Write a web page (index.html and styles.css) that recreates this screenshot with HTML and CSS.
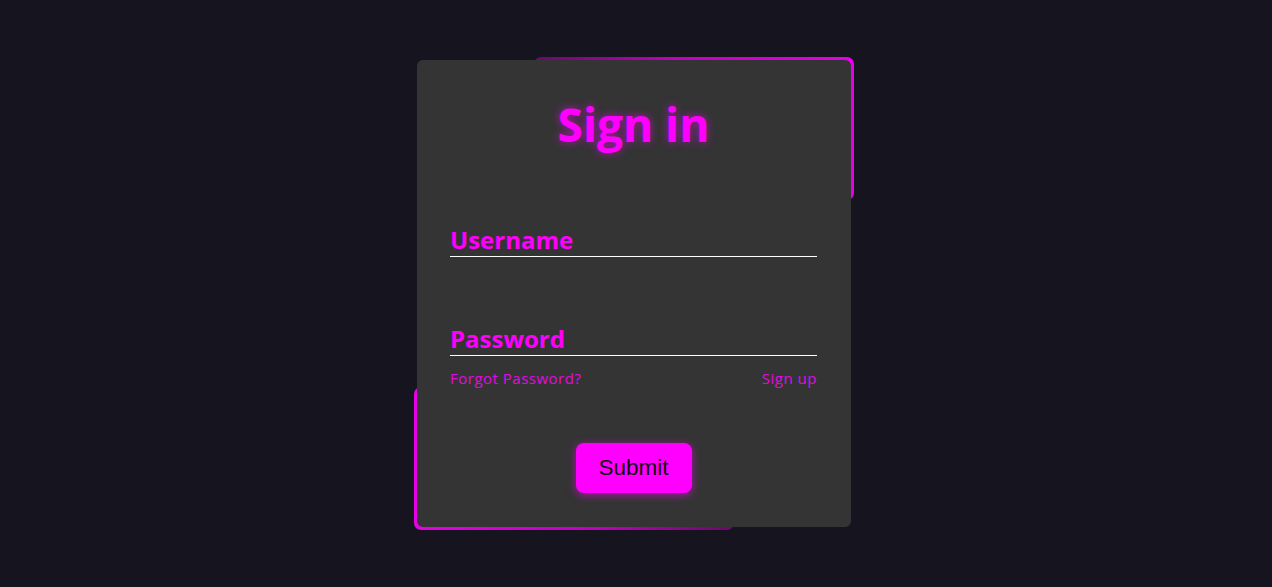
FILE: index.html
```html
<!DOCTYPE html>
<html lang="en">
<head>
    <meta charset="UTF-8">
    <meta name="viewport" content="width=device-width, initial-scale=1.0">
    <title>Sign in</title>
    <link rel="stylesheet" href="styles.css">
</head>
<body>
    <!-- Login Box -->
    <div class="login-wrap">
        <div class="glow glow-top"></div>
        <div class="glow glow-bottom"></div>

        <form class="login-box">
            <h2 class="title">Sign in</h2>

            <div class="input-box">
                <span class="input-label">Username</span>
            </div>

            <div class="input-box">
                <span class="input-label">Password</span>
            </div>

            <div class="links">
                <a href="#">Forgot Password?</a>
                <a href="#">Sign up</a>
            </div>

            <button type="button" class="submit-btn">Submit</button>
        </form>
    </div>
</body>
</html>
```

FILE: styles.css
```css
/* Universal Settings */
* {
    box-sizing: border-box;
}

body {
    background: #16141f;
    margin: 0;
    height: 100vh;
    display: flex;
    justify-content: center;
    align-items: center;
    overflow: hidden;
    font-family: 'Open Sans', 'DejaVu Sans', sans-serif;
}

/* Wrapper holds the glowing corners */
.login-wrap {
    position: relative;
    width: 434px;
    height: 467px;
    margin-right: 4px;
}

.glow {
    position: absolute;
    width: 320px;
    height: 143px;
    border-radius: 7px;
}

.glow-top {
    top: -3px;
    right: -3px;
    background: linear-gradient(90deg, #6a0a68, #c400c4 45%, #e800e8);
}

.glow-bottom {
    bottom: -3px;
    left: -3px;
    background: linear-gradient(90deg, #e800e8, #c400c4 55%, #6a0a68);
}

/* Login Box */
.login-box {
    position: relative;
    z-index: 1;
    width: 100%;
    height: 100%;
    padding: 0 34px 0 33px;
    background: #343434;
    border-radius: 6px;
    display: flex;
    flex-direction: column;
}

.title {
    margin: 34px 0 0;
    text-align: center;
    font-size: 46px;
    font-weight: 700;
    line-height: 60px;
    color: #ff00ff;
    text-shadow: 0 0 8px rgba(255, 0, 255, 0.6);
}

/* Inputs */
.input-box {
    border-bottom: 1px solid #ffffff;
    height: 34px;
    display: flex;
    align-items: flex-end;
}

.input-box:first-of-type {
    margin-top: 69px;
}

.input-box + .input-box {
    margin-top: 65px;
}

.input-label {
    font-size: 24px;
    font-weight: 700;
    line-height: 32px;
    color: #ff00ff;
}

/* Links */
.links {
    display: flex;
    justify-content: space-between;
    margin-top: 12px;
}

.links a {
    font-size: 15px;
    line-height: 20px;
    color: #e20ae2;
    text-decoration: none;
    letter-spacing: 0.5px;
}

/* Submit Button */
.submit-btn {
    align-self: center;
    margin-top: 55px;
    width: 116px;
    height: 50px;
    border: none;
    border-radius: 8px;
    background: #ff00ff;
    color: #111111;
    font-family: 'Liberation Sans', Arial, sans-serif;
    font-size: 22.5px;
    cursor: pointer;
    box-shadow: 0 2px 8px rgba(255, 0, 255, 0.6);
}
```
